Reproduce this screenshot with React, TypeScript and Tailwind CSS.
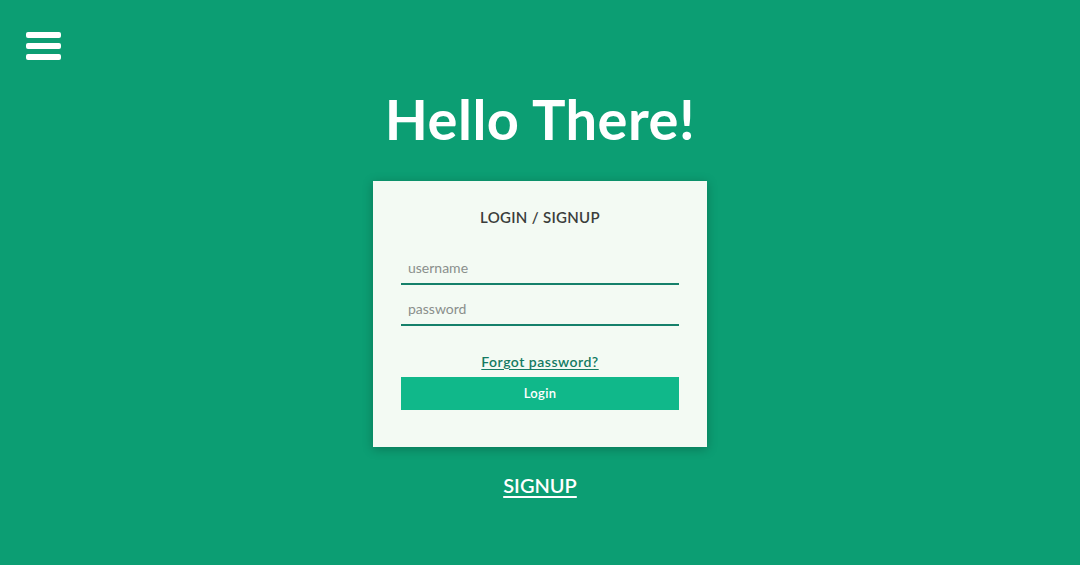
export default function App() {
  return (
    <div
      className="relative w-full h-[565px] bg-[#0c9e73] overflow-hidden"
      style={{ fontFamily: '"Lato", "Noto Sans", sans-serif' }}
    >
      {/* menu toggle */}
      <button className="absolute left-[26px] top-[32px] flex flex-col gap-[5px]" aria-label="menu">
        <span className="block w-[35px] h-[6px] rounded-[2px] bg-white" />
        <span className="block w-[35px] h-[6px] rounded-[2px] bg-white" />
        <span className="block w-[35px] h-[6px] rounded-[2px] bg-white" />
      </button>

      <div className="flex flex-col items-center pt-[86px]">
        <h1 className="text-[56px] leading-[66px] font-bold text-white tracking-[0.5px]">Hello There!</h1>

        <div className="mt-[29px] w-[334px] h-[266px] bg-[#f3faf3] shadow-[0_2px_10px_rgba(0,0,0,0.25)] flex flex-col items-center px-[28px]">
          <h2 className="mt-[26px] text-[15px] leading-[20px] font-semibold text-[#3a3d3b] tracking-[0.3px]">LOGIN / SIGNUP</h2>

          <div className="mt-[25px] w-full flex flex-col gap-[8px]">
            <div className="h-[33px] border-b-2 border-[#15806a] flex items-center px-[7px]">
              <span className="text-[14px] text-[#8a8f8c]">username</span>
            </div>
            <div className="h-[33px] border-b-2 border-[#15806a] flex items-center px-[7px]">
              <span className="text-[14px] text-[#8a8f8c]">password</span>
            </div>
          </div>

          <a className="mt-[27px] text-[14px] leading-[18px] font-semibold text-[#147a62] tracking-[0.5px] underline underline-offset-2">
            Forgot password?
          </a>
          <button className="mt-[6px] w-full h-[33px] bg-[#10b88a] text-white text-[13px] font-semibold tracking-[0.3px]">Login</button>
        </div>

        <a className="mt-[25px] text-[20px] leading-[26px] font-semibold text-white underline underline-offset-[3px]">SIGNUP</a>
      </div>
    </div>
  );
}
